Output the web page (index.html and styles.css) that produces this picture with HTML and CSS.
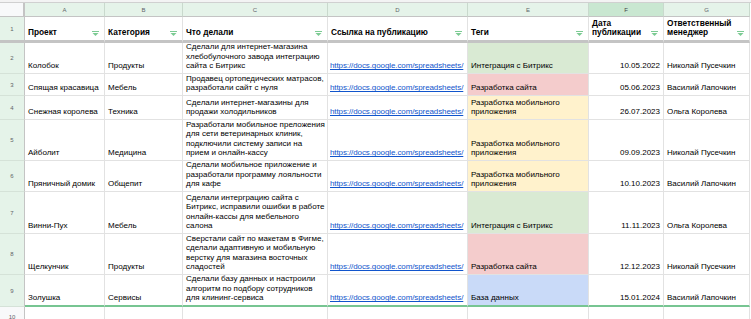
FILE: index.html
```html
<!DOCTYPE html>
<html lang="ru">
<head>
<meta charset="utf-8">
<title>Таблица проектов</title>
<link rel="stylesheet" href="styles.css">
</head>
<body>
<div class="topstrip"></div>
<div class="sheet">
  <!-- column headers -->
  <div class="corner"></div>
  <div class="colh">A</div>
  <div class="colh">B</div>
  <div class="colh">C</div>
  <div class="colh">D</div>
  <div class="colh">E</div>
  <div class="colh sel">F</div>
  <div class="colh">G</div>

  <!-- row 1 -->
  <div class="rowh frz">1</div>
  <div class="c hd frz"><span>Проект</span><svg class="flt" viewBox="0 0 7 5"><rect x="0" y="0" width="7" height="1"/><path d="M0.5 2H6.5L3.5 5Z"/></svg></div>
  <div class="c hd frz"><span>Категория</span><svg class="flt" viewBox="0 0 7 5"><rect x="0" y="0" width="7" height="1"/><path d="M0.5 2H6.5L3.5 5Z"/></svg></div>
  <div class="c hd frz"><span>Что делали</span><svg class="flt" viewBox="0 0 7 5"><rect x="0" y="0" width="7" height="1"/><path d="M0.5 2H6.5L3.5 5Z"/></svg></div>
  <div class="c hd frz"><span>Ссылка на публикацию</span><svg class="flt" viewBox="0 0 7 5"><rect x="0" y="0" width="7" height="1"/><path d="M0.5 2H6.5L3.5 5Z"/></svg></div>
  <div class="c hd frz"><span>Теги</span><svg class="flt" viewBox="0 0 7 5"><rect x="0" y="0" width="7" height="1"/><path d="M0.5 2H6.5L3.5 5Z"/></svg></div>
  <div class="c hd frz"><span>Дата<br>публикации</span><svg class="flt" viewBox="0 0 7 5"><rect x="0" y="0" width="7" height="1"/><path d="M0.5 2H6.5L3.5 5Z"/></svg></div>
  <div class="c hd frz"><span>Ответственный<br>менеджер</span><svg class="flt" viewBox="0 0 7 5"><rect x="0" y="0" width="7" height="1"/><path d="M0.5 2H6.5L3.5 5Z"/></svg></div>

  <!-- row 2 -->
  <div class="rowh">2</div>
  <div class="c">Колобок</div>
  <div class="c">Продукты</div>
  <div class="c"><span>Сделали для интернет-магазина<br>хлебобулочного завода интеграцию<br>сайта с Битрикс</span></div>
  <div class="c lnk"><a href="#">https://docs.google.com/spreadsheets/</a></div>
  <div class="c green">Интеграция с Битрикс</div>
  <div class="c num">10.05.2022</div>
  <div class="c">Николай Пусечкин</div>

  <!-- row 3 -->
  <div class="rowh">3</div>
  <div class="c">Спящая красавица</div>
  <div class="c">Мебель</div>
  <div class="c"><span>Продавец ортопедических матрасов,<br>разработали сайт с нуля</span></div>
  <div class="c lnk"><a href="#">https://docs.google.com/spreadsheets/</a></div>
  <div class="c red">Разработка сайта</div>
  <div class="c num">05.06.2023</div>
  <div class="c">Василий Лапочкин</div>

  <!-- row 4 -->
  <div class="rowh">4</div>
  <div class="c">Снежная королева</div>
  <div class="c">Техника</div>
  <div class="c"><span>Сделали интернет-магазины для<br>продажи холодильников</span></div>
  <div class="c lnk"><a href="#">https://docs.google.com/spreadsheets/</a></div>
  <div class="c yellow"><span>Разработка мобильного<br>приложения</span></div>
  <div class="c num">26.07.2023</div>
  <div class="c">Ольга Королева</div>

  <!-- row 5 -->
  <div class="rowh">5</div>
  <div class="c">Айболит</div>
  <div class="c">Медицина</div>
  <div class="c"><span>Разработали мобильное преложения<br>для сети ветеринарных клиник,<br>подключили систему записи на<br>прием и онлайн-кассу</span></div>
  <div class="c lnk"><a href="#">https://docs.google.com/spreadsheets/</a></div>
  <div class="c yellow"><span>Разработка мобильного<br>приложения</span></div>
  <div class="c num">09.09.2023</div>
  <div class="c">Николай Пусечкин</div>

  <!-- row 6 -->
  <div class="rowh">6</div>
  <div class="c">Пряничный домик</div>
  <div class="c">Общепит</div>
  <div class="c"><span>Сделали мобильное приложение и<br>разработали программу лояльности<br>для кафе</span></div>
  <div class="c lnk"><a href="#">https://docs.google.com/spreadsheets/</a></div>
  <div class="c yellow"><span>Разработка мобильного<br>приложения</span></div>
  <div class="c num">10.10.2023</div>
  <div class="c">Василий Лапочкин</div>

  <!-- row 7 -->
  <div class="rowh">7</div>
  <div class="c">Винни-Пух</div>
  <div class="c">Мебель</div>
  <div class="c"><span>Сделали интерграцию сайта с<br>Битрикс, исправили ошибки в работе<br>онлайн-кассы для мебельного<br>салона</span></div>
  <div class="c lnk"><a href="#">https://docs.google.com/spreadsheets/</a></div>
  <div class="c green">Интеграция с Битрикс</div>
  <div class="c num">11.11.2023</div>
  <div class="c">Ольга Королева</div>

  <!-- row 8 -->
  <div class="rowh">8</div>
  <div class="c">Щелкунчик</div>
  <div class="c">Продукты</div>
  <div class="c"><span>Сверстали сайт по макетам в Фигме,<br>сделали адаптивную и мобильную<br>верстку для магазина восточных<br>сладостей</span></div>
  <div class="c lnk"><a href="#">https://docs.google.com/spreadsheets/</a></div>
  <div class="c red">Разработка сайта</div>
  <div class="c num">12.12.2023</div>
  <div class="c">Николай Пусечкин</div>

  <!-- row 9 -->
  <div class="rowh">9</div>
  <div class="c last">Золушка</div>
  <div class="c last">Сервисы</div>
  <div class="c last"><span>Сделали базу данных и настроили<br>алгоритм по подбору сотрудников<br>для клининг-сервиса</span></div>
  <div class="c last lnk"><a href="#">https://docs.google.com/spreadsheets/</a></div>
  <div class="c last blue">База данных</div>
  <div class="c last num">15.01.2024</div>
  <div class="c last">Василий Лапочкин</div>

  <!-- row 10 -->
  <div class="rowh plain">10</div>
  <div class="c"></div>
  <div class="c"></div>
  <div class="c"></div>
  <div class="c"></div>
  <div class="c"></div>
  <div class="c"></div>
  <div class="c"></div>
</div>
</body>
</html>
```
FILE: styles.css
```css
html, body {
  margin: 0;
  padding: 0;
  background: #ffffff;
}

body {
  font-family: "Liberation Sans", Arial, sans-serif;
  color: #000000;
  overflow: hidden;
}

.topstrip {
  height: 3px;
  background: #f3f3f3;
  border-bottom: 1px solid #d0d0d0;
  box-sizing: border-box;
}

.sheet {
  display: grid;
  grid-template-columns: 25px 80px 78px 145px 140px 121px 75px 86px;
  grid-template-rows: 14px 26px 31px 22px 24px 41px 31px 42px 41px 32px 20px;
  width: 750px;
}

.corner {
  background: #f8f9fa;
  border-right: 2px solid #c4c4c4;
  border-bottom: 1px solid #c4c4c4;
}

.colh {
  background: #e5f3e9;
  border-right: 1px solid #c9d9cd;
  border-bottom: 1px solid #c4c4c4;
  font-size: 6px;
  color: #5f6368;
  display: flex;
  align-items: center;
  justify-content: center;
}

.colh.sel {
  background: #c9e7d1;
  color: #3c4043;
}

.rowh {
  background: #e5f3e9;
  border-right: 1px solid #c4c4c4;
  border-bottom: 1px solid #d5e2d8;
  font-size: 6px;
  color: #5f6368;
  display: flex;
  align-items: center;
  justify-content: center;
}

.rowh.frz {
  border-bottom: 3px solid #c4c4c4;
}

.rowh.plain {
  background: #f8f9fa;
  border-bottom: none;
}

.c {
  box-sizing: border-box;
  border-right: 1px solid #e2e2e2;
  border-bottom: 1px solid #e2e2e2;
  padding: 0 3px 2px 3px;
  display: flex;
  align-items: flex-end;
  overflow: hidden;
  white-space: nowrap;
  font-size: 8px;
  line-height: 9.6px;
}

.c.frz {
  border-bottom: 3px solid #c4c4c4;
}

.c.hd {
  font-weight: bold;
  font-size: 8.3px;
  justify-content: space-between;
  padding-bottom: 2px;
}

.c.num {
  justify-content: flex-end;
}

.c.lnk {
  padding-left: 2px;
  padding-right: 0;
}

.c.last {
  border-bottom: 2px solid #77c592;
}

.c a {
  color: #1155cc;
  text-decoration: underline;
  letter-spacing: -0.1px;
}

.green { background: #d9ead3; }
.red { background: #f4cccc; }
.yellow { background: #fff2cc; }
.blue { background: #c9daf8; }

.flt {
  width: 7px;
  height: 5px;
  flex: none;
  margin: 0 2px 2px 4px;
  fill: #7ccb93;
}
```
